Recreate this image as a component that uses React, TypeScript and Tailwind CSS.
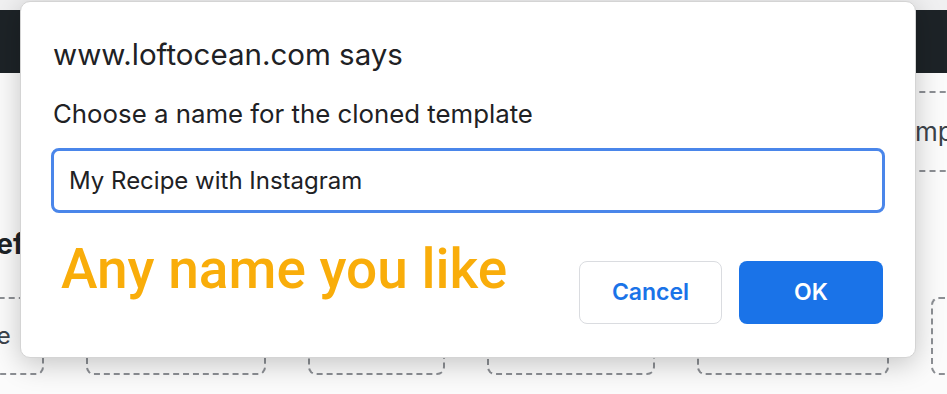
import React from "react";

const boxes = [
  { w: "w-[144px] -ml-[100px]", label: "Recipe" },
  { w: "w-[180px]", label: "" },
  { w: "w-[137px]", label: "" },
  { w: "w-[168px]", label: "" },
  { w: "w-[192px]", label: "" },
  { w: "w-[150px]", label: "" },
];

const App: React.FC = () => {
  return (
    <div className="relative h-[394px] w-[947px] overflow-hidden bg-[#fbfbfb] font-['Inter',sans-serif]">
      {/* page behind the prompt */}
      <div className="h-[10px] bg-[#f0f0f1]" />
      <div className="h-[63px] bg-[#1d2327]" />
      <div className="flex justify-end pt-[18px]">
        <div className="mr-[-60px] flex h-[81px] w-[200px] items-center border-y-2 border-dashed border-[#8c8f94] pl-[101px] text-[26px] whitespace-nowrap text-[#3c434a]">
          Import Template
        </div>
      </div>
      <div className="mt-[54px] -ml-[24px] text-[28px] leading-[36px] font-bold whitespace-nowrap text-[#1d2327]">
        Default
      </div>
      <div className="mt-[35px] flex gap-[42px]">
        {boxes.map((b, i) => (
          <div
            key={i}
            className={`${b.w} flex h-[78px] shrink-0 items-center justify-center rounded-[8px] border-2 border-dashed border-[#8c8f94] text-[24px] text-[#3c434a]`}
          >
            {b.label}
          </div>
        ))}
      </div>

      {/* prompt dialog */}
      <div className="absolute top-[1px] left-[20px] flex h-[357px] w-[896px] flex-col rounded-[10px] border border-[#d4d4d4] bg-white px-[32px] pt-[34px] shadow-[0_6px_28px_rgba(0,0,0,0.22)]">
        <div className="text-[29.5px] leading-[36px] text-[#202124]">www.loftocean.com says</div>
        <div className="mt-[26px] text-[25.8px] leading-[32px] text-[#202124]">
          Choose a name for the cloned template
        </div>
        <div className="mt-[18px] -ml-[2px] flex h-[65px] w-[834px] items-center rounded-[8px] border-[3px] border-[#4a86ea] pl-[15px] text-[24px] text-[#202124]">
          My Recipe with Instagram
        </div>
        <div className="mt-[24px] flex items-start">
          <div className="ml-[8px] font-['Roboto',sans-serif] text-[55px] leading-[64px] font-medium text-[#f9ad0a]">
            Any name you like
          </div>
          <div className="mt-[24px] ml-auto flex gap-[17px]">
            <button className="flex h-[63px] w-[143px] items-center justify-center rounded-[8px] border border-[#dadce0] bg-white text-[23px] font-semibold text-[#1a73e8]">
              Cancel
            </button>
            <button className="flex h-[63px] w-[144px] items-center justify-center rounded-[8px] bg-[#1a73e8] text-[23px] font-semibold text-white">
              OK
            </button>
          </div>
        </div>
      </div>
    </div>
  );
};

export default App;
